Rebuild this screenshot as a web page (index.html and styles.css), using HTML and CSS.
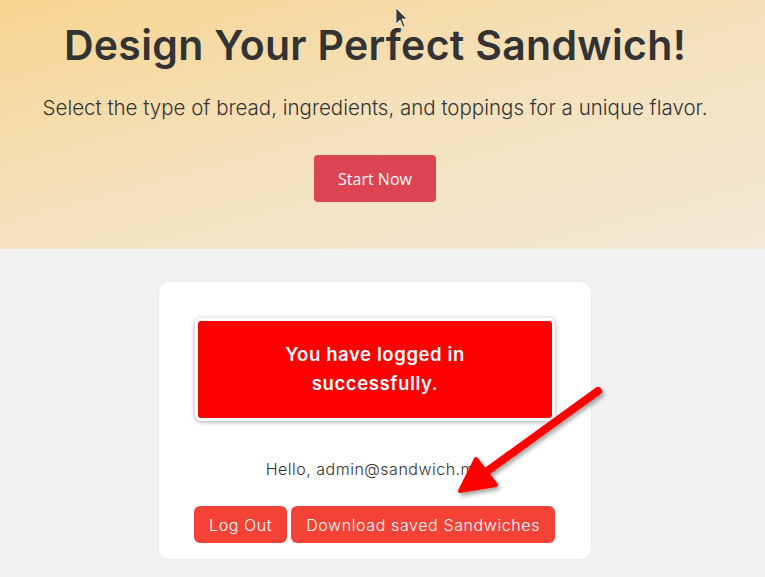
FILE: index.html
```html
<!DOCTYPE html>
<html>
<head>
<meta charset="utf-8">
<link rel="stylesheet" href="styles.css">
</head>
<body>
<section class="hero">
  <h1 class="hero-title">Design Your Perfect Sandwich!</h1>
  <p class="hero-sub">Select the type of bread, ingredients, and toppings for a unique flavor.</p>
  <button class="btn-start">Start Now</button>
  <svg class="cursor" width="14" height="22" viewBox="0 0 14 22"><path d="M1 1 L1 17 L5 13 L8 20 L10 19 L7 12 L12 12 Z" fill="#3a3a3a" stroke="#eee" stroke-width="0.8"/></svg>
</section>
<main class="main">
  <div class="card">
    <div class="alert">You have logged in successfully.</div>
    <p class="hello">Hello, admin@sandwich.ma</p>
    <div class="actions">
      <button class="btn">Log Out</button>
      <button class="btn">Download saved Sandwiches</button>
    </div>
  </div>
  <svg class="arrow" width="180" height="140" viewBox="0 0 180 140">
    <defs>
      <filter id="sh" x="-20%" y="-20%" width="140%" height="140%">
        <feDropShadow dx="2" dy="3" stdDeviation="2" flood-color="#000" flood-opacity="0.35"/>
      </filter>
    </defs>
    <g filter="url(#sh)">
      <line x1="152" y1="14" x2="40" y2="95" stroke="#ff0000" stroke-width="8" stroke-linecap="round"/>
      <path d="M14 114 L30 82 L50 108 Z" fill="#ff0000" stroke="#ff0000" stroke-width="4" stroke-linejoin="round"/>
    </g>
  </svg>
</main>
</body>
</html>
```
FILE: styles.css
```css
html, body {
  margin: 0;
  padding: 0;
}
body {
  background: #f2f2f2;
  font-family: "Inter", "Liberation Sans", sans-serif;
  color: #333;
  width: 765px;
  height: 577px;
  overflow: hidden;
}
.hero {
  position: relative;
  height: 249px;
  background: linear-gradient(165deg, #f8d591 0%, #f4e1bd 50%, #f3e9d6 100%);
  text-align: center;
  padding: 20px 15px 0 0;
  box-sizing: border-box;
}
.hero-title {
  margin: 0;
  font-size: 41px;
  font-weight: 600;
  line-height: 50px;
  color: #333;
  letter-spacing: 0.3px;
}
.hero-sub {
  margin: 25px 0 0;
  font-size: 20.5px;
  font-weight: 300;
  line-height: 26px;
  color: #333;
}
.btn-start {
  margin-top: 34px;
  width: 122px;
  height: 47px;
  border: none;
  border-radius: 4px;
  background: #dc4454;
  color: #fff;
  font-family: "Open Sans", sans-serif;
  font-size: 16px;
  cursor: pointer;
}
.cursor {
  position: absolute;
  left: 395px;
  top: 7px;
}
.main {
  position: relative;
  padding: 33px 15px 0 0;
  display: flex;
  justify-content: center;
}
.card {
  width: 432px;
  box-sizing: border-box;
  background: #fff;
  border-radius: 10px;
  padding: 36px 35px 16px;
  box-shadow: 0 0 4px rgba(0,0,0,0.05);
}
.alert {
  box-sizing: border-box;
  width: 360px;
  margin: 0 auto;
  height: 103px;
  background: #ff0000;
  border: 3px solid #fff;
  border-radius: 6px;
  box-shadow: 0 1px 5px rgba(0,0,0,0.35);
  color: #fff;
  font-weight: 600;
  font-size: 18.5px;
  letter-spacing: 0.6px;
  line-height: 29px;
  text-align: center;
  padding: 19px 50px 0;
}
.hello {
  margin: 37px 0 0;
  text-align: center;
  font-size: 16px;
  font-weight: 300;
  letter-spacing: 0.5px;
  line-height: 22px;
  color: #333;
}
.actions {
  margin-top: 26px;
  display: flex;
  gap: 4px;
}
.btn {
  height: 37px;
  border: none;
  border-radius: 6px;
  background: #f44336;
  color: #fff;
  font-family: "Inter", sans-serif;
  font-weight: 300;
  font-size: 16px;
  letter-spacing: 0.6px;
  padding: 0 15px;
  cursor: pointer;
}
.arrow {
  position: absolute;
  left: 446px;
  top: 128px;
}
```
